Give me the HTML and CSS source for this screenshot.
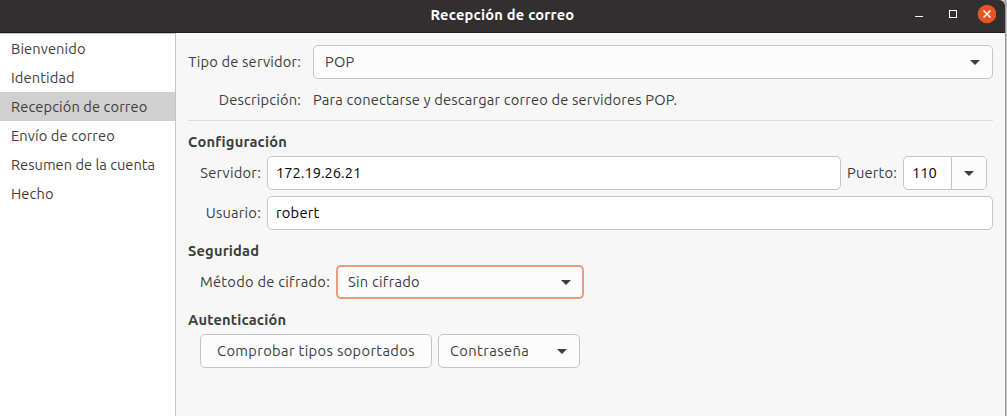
FILE: index.html
```html
<!DOCTYPE html>
<html lang="es">
<head>
<meta charset="utf-8">
<title>Recepción de correo</title>
<link rel="stylesheet" href="styles.css">
</head>
<body>
<div class="window">
  <header class="titlebar">
    <h1 class="title">Recepción de correo</h1>
    <svg class="controls" width="84" height="28" viewBox="0 0 84 28">
      <path d="M3 16.500h8" stroke="#fff" fill="none"/>
      <rect x="37.500" y="10.500" width="7" height="7" stroke="#fff" fill="none"/>
      <circle cx="75" cy="14" r="9.300" fill="#e95420"/>
      <path d="M71.500 10.500l7 7m0-7l-7 7" stroke="#fff" stroke-width="1.500" fill="none"/>
    </svg>
  </header>
  <div class="body">
    <nav class="sidebar">
      <div class="step">Bienvenido</div>
      <div class="step">Identidad</div>
      <div class="step selected">Recepción de correo</div>
      <div class="step">Envío de correo</div>
      <div class="step summary">Resumen de la cuenta</div>
      <div class="step">Hecho</div>
    </nav>
    <main class="page">
      <div class="row">
        <span class="label type-label"><span>Tipo de servidor:</span></span>
        <div class="control combo grow"><span>POP</span><svg class="arrow" width="10" height="5" viewBox="0 0 10 5"><path d="M0 0h10L5 5z"/></svg></div>
      </div>
      <div class="row description">
        <span class="label type-label"><span>Descripción:</span></span>
        <span class="description-text">Para conectarse y descargar correo de servidores POP.</span>
      </div>
      <h2 class="heading">Configuración</h2>
      <div class="row">
        <span class="label field-label"><span>Servidor:</span></span>
        <div class="control entry grow"><span class="numbers">172.19.26.21</span></div>
        <span class="label port-label">Puerto:</span>
        <div class="control port"><span class="port-value">110</span><span class="port-button"><svg class="arrow" width="10" height="5" viewBox="0 0 10 5"><path d="M0 0h10L5 5z"/></svg></span></div>
      </div>
      <div class="row user-row">
        <span class="label field-label"><span>Usuario:</span></span>
        <div class="control entry grow"><span>robert</span></div>
      </div>
      <h2 class="heading">Seguridad</h2>
      <div class="row">
        <span class="label method-label"><span>Método de cifrado:</span></span>
        <div class="control combo focused"><span>Sin cifrado</span><svg class="arrow" width="10" height="5" viewBox="0 0 10 5"><path d="M0 0h10L5 5z"/></svg></div>
      </div>
      <h2 class="heading">Autenticación</h2>
      <div class="row auth-row">
        <div class="control button"><span>Comprobar tipos soportados</span></div>
        <div class="control combo auth"><span>Contraseña</span><svg class="arrow" width="10" height="5" viewBox="0 0 10 5"><path d="M0 0h10L5 5z"/></svg></div>
      </div>
    </main>
  </div>
</div>
</body>
</html>
```
FILE: styles.css
```css
* { box-sizing: border-box; }
body {
  margin: 0;
  background: #c4c4c4;
  color: #3d3d3d;
  font: 14.667px/20px Ubuntu, "Noto Sans", sans-serif;
  letter-spacing: .17px;
  white-space: nowrap;
  overflow: hidden;
}
.window {
  display: flex;
  flex-direction: column;
  width: 1006px;
  height: 416px;
  border-right: 1px solid #969696;
}
.titlebar {
  display: grid;
  grid-template-columns: 1fr auto 1fr;
  height: 33px;
  background: #322f30;
  border-bottom: 1px solid #1e1c1d;
  border-top-right-radius: 6px;
}
.title {
  grid-column: 2;
  margin: 5px 0 0;
  color: #fff;
  font-size: 14.667px;
  line-height: 20px;
  letter-spacing: .22px;
}
.controls { justify-self: end; margin-right: 9px; }
.body { display: flex; flex: 1; }
.sidebar {
  width: 176px;
  background: #fff;
  border-top: 1px solid #c5c5c5;
  border-right: 1px solid #c5c5c5;
  letter-spacing: .1px;
}
.step { height: 29px; padding: 5px 0 0 11px; }
.summary { letter-spacing: 0; }
.selected { background: #d0d0d0; }
.page { flex: 1; padding: 12px 12px 0; background: #f7f7f7; }
.row { display: flex; height: 34px; align-items: center; }
.grow { flex: 1; }
.label { display: flex; flex: none; justify-content: flex-end; }
.type-label { width: 113px; margin-right: 12px; }
.field-label { width: 73px; margin-right: 6px; letter-spacing: .22px; }
.method-label { width: 142px; margin-right: 6px; letter-spacing: .25px; }
.port-label { width: 50px; margin: 0 6px; }
.control {
  display: flex;
  height: 34px;
  align-items: center;
  border: 1px solid #c4c4c4;
  border-radius: 5px;
}
.combo { justify-content: space-between; padding: 0 12px 0 11px; background: #fcfcfc; }
.entry { padding-left: 8px; background: #fff; color: #000; }
.entry { letter-spacing: .25px; }
.numbers { letter-spacing: 0; }
.arrow { display: block; fill: #3d3d3d; }
.description { height: 42px; border-bottom: 1px solid #dcdcdc; }
.heading { margin: 11px 0 4px; font-size: 14.667px; line-height: 20px; }
.user-row { margin-top: 6px; }
.port { width: 84px; margin-right: 6px; background: #fff; color: #000; overflow: hidden; }
.port-value { width: 47px; padding-left: 8px; letter-spacing: 0; }
.port-button {
  display: flex;
  flex: 1;
  height: 32px;
  align-items: center;
  justify-content: center;
  border-left: 1px solid #c4c4c4;
  background: #fcfcfc;
}
.focused { width: 248px; border: 2px solid #eb9a7e; padding: 0 11px 0 10px; letter-spacing: .25px; }
.auth-row { gap: 6px; padding-left: 12px; }
.button { width: 232px; justify-content: center; background: #fcfcfc; letter-spacing: .36px; }
.auth { width: 142px; letter-spacing: .4px; }
```
